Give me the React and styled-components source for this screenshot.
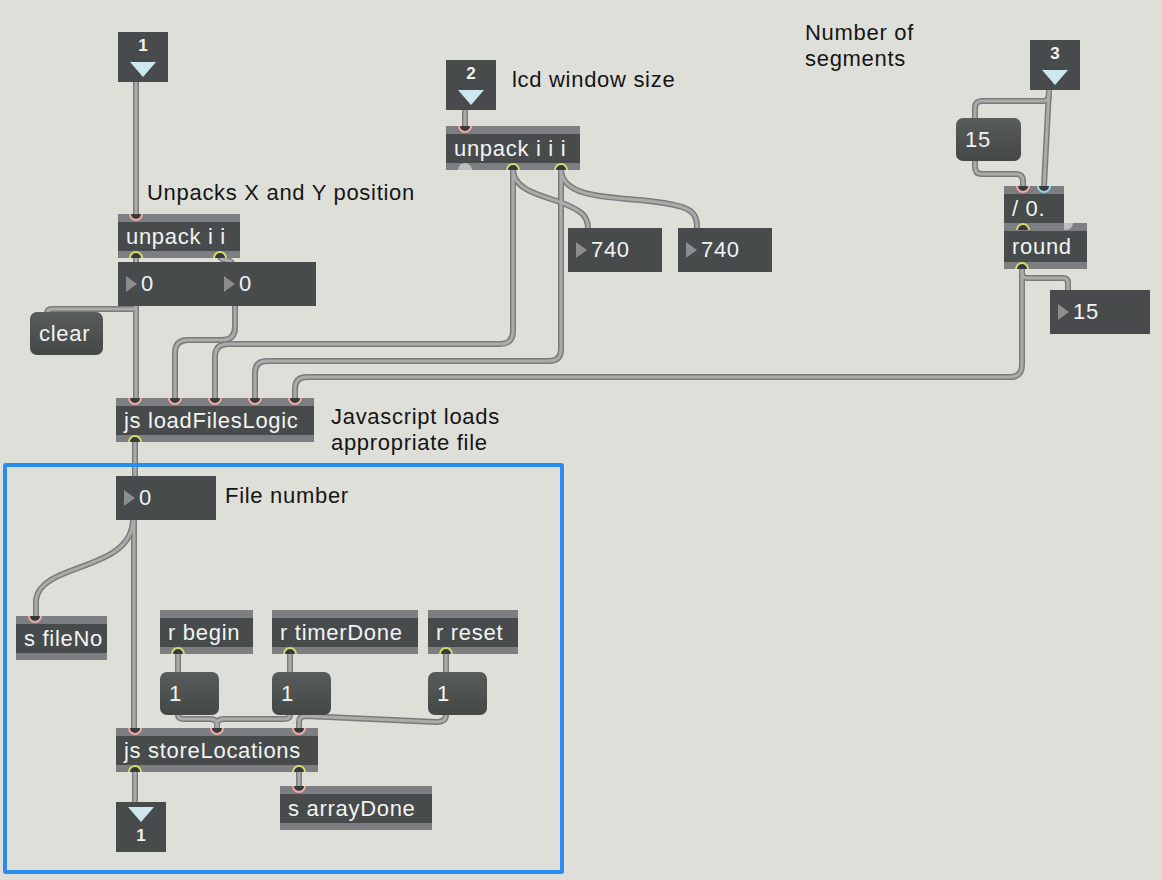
import React from "react";
import styled, { createGlobalStyle } from "styled-components";

const GlobalStyle = createGlobalStyle`
  body {
    margin: 0;
    background: #dfdfd9;
  }
`;

const BOX = "#474b4b";
const BAND = "#7c7e81";
const INK = "#f2f3f3";

// patcher objects: position on the canvas, inlet / outlet offsets and kinds
const objects = [
  { x: 118, y: 214, w: 122, text: "unpack i i", ins: [[18, "in"]], outs: [[18, "out"], [102, "out"]] },
  { x: 446, y: 126, w: 134, text: "unpack i i i", ins: [[19, "in"]], outs: [[19, "off"], [67, "out"], [115, "out"]] },
  { x: 116, y: 398, w: 198, text: "js loadFilesLogic", ins: [[19, "in"], [59, "in"], [99, "in"], [139, "in"], [179, "in"]], outs: [[19, "out"]] },
  { x: 1004, y: 223, w: 83, h: 46, text: "round", ins: [[19, "in"], [62, "off"]], outs: [[18, "out"]] },
  { x: 1004, y: 186, w: 60, text: "/ 0.", ins: [[19, "in"], [40, "cold"]], outs: [[19, "out"]] },
  { x: 116, y: 728, w: 202, text: "js storeLocations", ins: [[19, "in"], [101, "in"], [183, "in"]], outs: [[19, "out"], [183, "out"]] },
  { x: 280, y: 786, w: 152, text: "s arrayDone", ins: [[19, "in"]], outs: [] },
  { x: 16, y: 616, w: 91, text: "s fileNo", ins: [[19, "in"]], outs: [] },
  { x: 160, y: 610, w: 93, text: "r begin", ins: [], outs: [[18, "out"]] },
  { x: 272, y: 610, w: 146, text: "r timerDone", ins: [], outs: [[18, "out"]] },
  { x: 428, y: 610, w: 90, text: "r reset", ins: [], outs: [[18, "out"]] },
];

const numbers = [
  { x: 118, y: 262, w: 98, value: "0" },
  { x: 216, y: 262, w: 100, value: "0" },
  { x: 568, y: 228, w: 94, value: "740" },
  { x: 678, y: 228, w: 94, value: "740" },
  { x: 1050, y: 290, w: 100, value: "15" },
  { x: 116, y: 476, w: 100, value: "0" },
];

const messages = [
  { x: 30, y: 312, w: 73, text: "clear" },
  { x: 956, y: 118, w: 65, text: "15" },
  { x: 160, y: 672, w: 59, text: "1" },
  { x: 272, y: 672, w: 59, text: "1" },
  { x: 428, y: 672, w: 59, text: "1" },
];

const inlets = [
  { x: 118, y: 32, n: "1" },
  { x: 446, y: 60, n: "2" },
  { x: 1030, y: 40, n: "3" },
];

const comments = [
  { x: 805, y: 20, lines: ["Number of", "segments"] },
  { x: 512, y: 67, lines: ["lcd window size"] },
  { x: 147, y: 180, lines: ["Unpacks X and Y position"] },
  { x: 331, y: 404, lines: ["Javascript loads", "appropriate file"] },
  { x: 225, y: 483, lines: ["File number"] },
];

// patch cords, drawn by hand along the routes in the patcher
const cords = [
  "M136,82 V214",
  "M136,256 V262",
  "M220,256 C220,262 232,258 232,264",
  "M136,305 Q136,309 131,309 L52,309 Q47,309 47,314",
  "M136,305 V398",
  "M235,305 V327 Q235,340 222,340 L188,340 Q175,340 175,353 V398",
  "M513,169 V331 Q513,344 500,344 L228,344 Q215,344 215,357 V398",
  "M561,169 V349 Q561,361 549,361 L267,361 Q255,361 255,373 V398",
  "M1022,269 V365 Q1022,377 1010,377 L307,377 Q295,377 295,389 V398",
  "M513,169 C513,190 540,195 560,202 C580,210 588,215 588,228",
  "M561,169 C561,195 600,197 640,200 C690,205 697,210 697,228",
  "M465,110 V126",
  "M1049,90 L1044,186",
  "M1049,90 V95 Q1049,101 1043,101 L982,101 Q975,101 975,108 V118",
  "M975,162 V167 Q975,174 982,174 L1016,174 Q1023,174 1023,181 V186",
  "M1022,269 V273 Q1022,278 1027,278 L1063,278 Q1068,278 1068,283 V290",
  "M135,442 V476",
  "M134,519 V728",
  "M133,519 C133,572 40,562 36,600 V617",
  "M178,654 V672",
  "M290,654 V672",
  "M446,654 V672",
  "M178,715 Q178,719 184,719 L210,719 Q217,719 217,724 V728",
  "M290,715 Q290,719 284,719 L224,719 Q217,719 217,724 V728",
  "M446,715 Q446,722 436,722 L306,716 Q299,716 299,722 V728",
  "M135,772 V802",
  "M299,772 V786",
];

const portColors = {
  in: "#f0a9a4",
  cold: "#8fd3e6",
  out: "#d9d96a",
};

const Canvas = styled.div`
  position: relative;
  width: 1162px;
  height: 880px;
  overflow: hidden;
  background: #dfdfd9;
  font-family: "Liberation Sans", Arial, sans-serif;
`;

const Wires = styled.svg`
  position: absolute;
  left: 0;
  top: 0;
`;

const Obj = styled.div`
  position: absolute;
  left: ${(p) => p.$x}px;
  top: ${(p) => p.$y}px;
  width: ${(p) => p.$w}px;
  height: ${(p) => p.$h || 44}px;
  display: flex;
  flex-direction: column;
  overflow: hidden;
`;

const Band = styled.div`
  flex: 0 0 ${(p) => p.$h}px;
  background: ${BAND};
`;

const Body = styled.div`
  flex: 1;
  display: flex;
  align-items: center;
  padding-left: 8px;
  background: ${BOX};
  color: ${INK};
  font-size: 22px;
  letter-spacing: 0.7px;
  white-space: nowrap;
`;

const Port = styled.span`
  position: absolute;
  left: ${(p) => p.$x - 7}px;
  ${(p) => (p.$top ? "top: -7px;" : "bottom: -7px;")}
  width: 14px;
  height: 14px;
  box-sizing: border-box;
  border-radius: 50%;
  background: ${(p) => (p.$kind === "off" ? "#bdbdbd" : "#363a3a")};
  border: ${(p) => (p.$kind === "off" ? "none" : `2px solid ${portColors[p.$kind]}`)};
`;

const NumBox = styled.div`
  position: absolute;
  left: ${(p) => p.$x}px;
  top: ${(p) => p.$y}px;
  width: ${(p) => p.$w}px;
  height: 44px;
  box-sizing: border-box;
  display: flex;
  align-items: center;
  gap: 4px;
  padding-left: 8px;
  background: ${BOX};
  color: ${INK};
  font-size: 22px;
  letter-spacing: 0.7px;
`;

const Tri = styled.span`
  width: 0;
  height: 0;
  border-top: 8px solid transparent;
  border-bottom: 8px solid transparent;
  border-left: 11px solid #8b8d8f;
`;

const Msg = styled.div`
  position: absolute;
  left: ${(p) => p.$x}px;
  top: ${(p) => p.$y}px;
  width: ${(p) => p.$w}px;
  height: 43px;
  box-sizing: border-box;
  display: flex;
  align-items: center;
  padding-left: 9px;
  border-radius: 7px;
  background: linear-gradient(#585c5b, #434746);
  color: ${INK};
  font-size: 22px;
  letter-spacing: 0.7px;
`;

const IOBox = styled.div`
  position: absolute;
  left: ${(p) => p.$x}px;
  top: ${(p) => p.$y}px;
  width: 50px;
  height: 50px;
  box-sizing: border-box;
  display: flex;
  flex-direction: column;
  align-items: center;
  padding-top: ${(p) => (p.$out ? 5 : 4)}px;
  background: ${BOX};
`;

const IONum = styled.span`
  color: ${INK};
  font-size: 17px;
  font-weight: bold;
  line-height: 20px;
  margin: ${(p) => (p.$out ? "4px 0 0" : "0 0 6px")};
`;

const Arrow = styled.span`
  width: 0;
  height: 0;
  border-left: 13px solid transparent;
  border-right: 13px solid transparent;
  border-top: 15px solid #cde9ef;
`;

const Comment = styled.div`
  position: absolute;
  left: ${(p) => p.$x}px;
  top: ${(p) => p.$y}px;
  color: #151515;
  font-size: 22px;
  line-height: 26px;
  letter-spacing: 0.7px;
  white-space: nowrap;
`;

const Selection = styled.div`
  position: absolute;
  left: 3px;
  top: 463px;
  width: 561px;
  height: 411px;
  box-sizing: border-box;
  border: 4px solid #2a8bf0;
  border-radius: 3px;
`;

const App = () => {
  return (
    <Canvas>
      <GlobalStyle />
      <Wires width="1162" height="880">
        {cords.map((d, i) => (
          <path key={"o" + i} d={d} fill="none" stroke="#7b7b7b" strokeWidth="6" strokeLinecap="round" />
        ))}
        {cords.map((d, i) => (
          <path key={"i" + i} d={d} fill="none" stroke="#ababab" strokeWidth="3" strokeLinecap="round" />
        ))}
      </Wires>

      <Selection />

      {comments.map((c) => (
        <Comment key={c.lines[0]} $x={c.x} $y={c.y}>
          {c.lines.map((l) => (
            <div key={l}>{l}</div>
          ))}
        </Comment>
      ))}

      {inlets.map((b) => (
        <IOBox key={b.n} $x={b.x} $y={b.y}>
          <IONum>{b.n}</IONum>
          <Arrow />
        </IOBox>
      ))}
      <IOBox $x={116} $y={802} $out>
        <Arrow />
        <IONum $out>1</IONum>
      </IOBox>

      {numbers.map((n, i) => (
        <NumBox key={i} $x={n.x} $y={n.y} $w={n.w}>
          <Tri />
          {n.value}
        </NumBox>
      ))}

      {messages.map((m, i) => (
        <Msg key={i} $x={m.x} $y={m.y} $w={m.w}>
          {m.text}
        </Msg>
      ))}

      {objects.map((o) => (
        <Obj key={o.text} $x={o.x} $y={o.y} $w={o.w} $h={o.h}>
          <Band $h={8} />
          <Body>{o.text}</Body>
          <Band $h={7} />
          {o.ins.map(([x, kind]) => (
            <Port key={"in" + x} $x={x} $kind={kind} $top />
          ))}
          {o.outs.map(([x, kind]) => (
            <Port key={"out" + x} $x={x} $kind={kind} />
          ))}
        </Obj>
      ))}
    </Canvas>
  );
};

export default App;
